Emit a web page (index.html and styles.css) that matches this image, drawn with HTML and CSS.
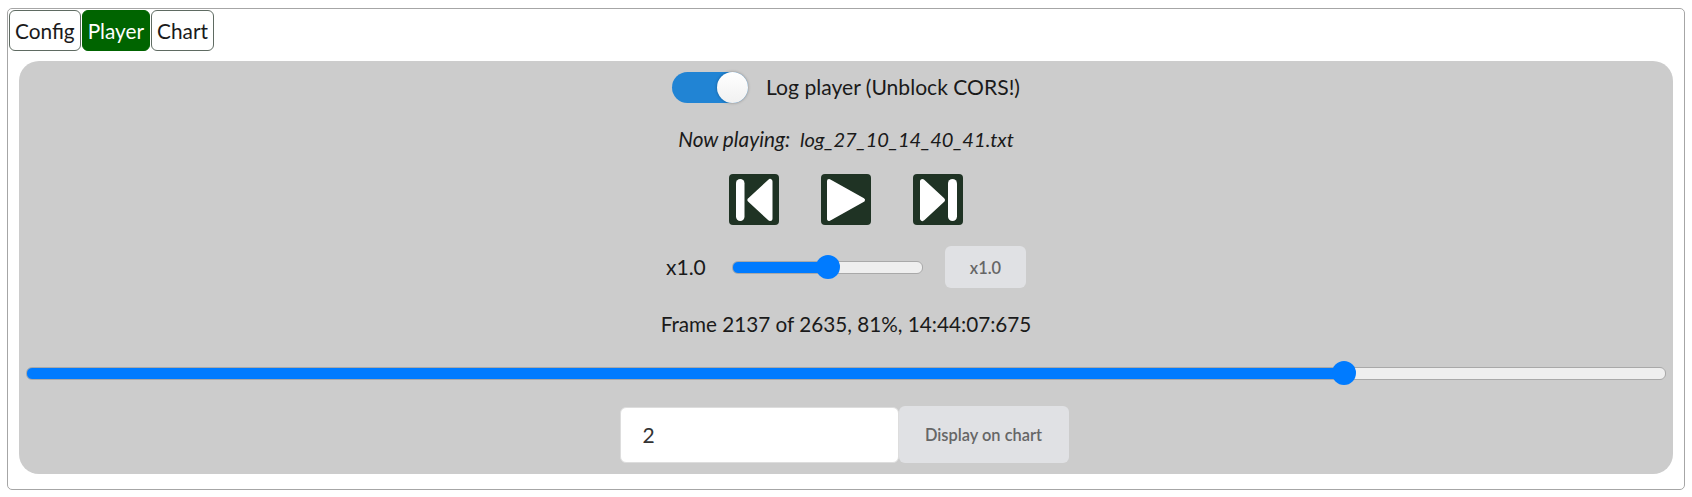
FILE: index.html
```html
<!DOCTYPE html>
<html lang="en">
<head>
    <meta charset="UTF-8">
    <meta name="viewport" content="width=device-width, initial-scale=1.0">
    <title>Player</title>
    <link rel="stylesheet" href="styles.css">
</head>
<body>
    <div class="main-box">
        <div class="tabs">
            <button class="tab">Config</button>
            <button class="tab tab-active">Player</button>
            <button class="tab">Chart</button>
        </div>
        <div class="player-panel">
            <div class="toggle-row">
                <span class="toggle"><span class="toggle-knob"></span></span>
                <span class="toggle-label">Log player (Unblock CORS!)</span>
            </div>
            <div class="now-playing">Now playing:&nbsp; <span class="now-file">log_27_10_14_40_41.txt</span></div>
            <div class="controls">
                <svg class="control-icon" viewBox="0 0 50 51">
                    <rect width="50" height="51" rx="4" fill="#1f3324"/>
                    <rect x="7" y="5" width="8.5" height="42" rx="4.2" fill="#fff"/>
                    <path d="M21 26 L41 7.5 V44.5 Z" fill="#fff" stroke="#fff" stroke-width="5" stroke-linejoin="round"/>
                </svg>
                <svg class="control-icon" viewBox="0 0 50 51">
                    <rect width="50" height="51" rx="4" fill="#1f3324"/>
                    <path d="M8 7 L42 26 L8 45 Z" fill="#fff" stroke="#fff" stroke-width="4" stroke-linejoin="round"/>
                </svg>
                <svg class="control-icon" viewBox="0 0 50 51">
                    <rect width="50" height="51" rx="4" fill="#1f3324"/>
                    <path d="M9.5 7.5 L29.5 26 L9.5 44.5 Z" fill="#fff" stroke="#fff" stroke-width="5" stroke-linejoin="round"/>
                    <rect x="35" y="5" width="9" height="42" rx="4.5" fill="#fff"/>
                </svg>
            </div>
            <div class="speed-row">
                <span class="speed-label">x1.0</span>
                <input class="slider slider-speed" type="range" min="0" max="100" value="50" style="--fill: 50%">
                <button class="grey-btn speed-btn">x1.0</button>
            </div>
            <div class="frame-info">Frame 2137 of 2635, 81%, 14:44:07:675</div>
            <input class="slider slider-frame" type="range" min="0" max="2642" value="2137" style="--fill: 81%">
            <div class="chart-row">
                <input class="frame-input" type="text" value="2">
                <button class="grey-btn chart-btn">Display on chart</button>
            </div>
        </div>
    </div>
</body>
</html>
```

FILE: styles.css
```css
* {
    box-sizing: border-box;
}
body {
    font-family: Lato, "Open Sans", sans-serif;
    background-color: #fff;
    color: #1a1a1a;
    margin: 8px 7px 7px 7px;
}
.main-box {
    border: 1px solid #a6a6a6;
    border-radius: 5px;
    height: 482px;
    padding: 1px 11px 15px 1px;
}
.tabs {
    display: flex;
    gap: 1px;
    height: 41px;
}
.tab {
    font-family: inherit;
    font-size: 20.8px;
    color: #1a1a1a;
    background-color: #fff;
    border: 1px solid #5f6b62;
    border-radius: 6px;
    padding: 0 5px;
    cursor: pointer;
}
.tab-active {
    background-color: #006400;
    border-color: #006400;
    color: #fff;
}
.player-panel {
    background-color: #ccc;
    border-radius: 20px;
    margin: 10px 0 0 10px;
    height: 413px;
    padding-top: 11px;
    display: flex;
    flex-direction: column;
    align-items: center;
}
.toggle-row {
    display: flex;
    align-items: center;
    gap: 18px;
    height: 31px;
}
.toggle {
    display: block;
    position: relative;
    width: 76px;
    height: 31px;
    border-radius: 16px;
    background-color: #2184d4;
}
.toggle-knob {
    position: absolute;
    right: 0;
    top: 0;
    width: 31px;
    height: 31px;
    border-radius: 50%;
    background: linear-gradient(#fff, #f1f1f1);
    box-shadow: 0 0 3px rgba(0, 0, 0, 0.35);
}
.toggle-label {
    font-size: 21.1px;
    line-height: 24px;
    padding-bottom: 2px;
}
.now-playing {
    font-size: 20.8px;
    font-style: italic;
    margin-top: 24px;
    line-height: 24px;
}
.now-file {
    font-size: 20.1px;
}
.controls {
    display: flex;
    gap: 42px;
    margin-top: 23px;
}
.control-icon {
    display: block;
    width: 50px;
    height: 51px;
}
.speed-row {
    display: flex;
    align-items: center;
    height: 42px;
    margin-top: 21px;
}
.speed-label {
    font-size: 21px;
    width: 66px;
    padding-bottom: 2px;
}
.grey-btn {
    font-family: inherit;
    font-size: 16.4px;
    font-weight: 600;
    color: #666;
    background-color: #e0e1e4;
    border: none;
    border-radius: 6px;
}
.speed-btn {
    width: 81px;
    height: 42px;
    margin-left: 22px;
}
.frame-info {
    font-size: 20.7px;
    line-height: 24px;
    margin-top: 24px;
}
.slider {
    -webkit-appearance: none;
    appearance: none;
    display: block;
    margin: 0;
    height: 24px;
    background: transparent;
}
.slider::-webkit-slider-runnable-track {
    height: 13px;
    border-radius: 6px;
    border: 1px solid #a9a9a9;
    background: linear-gradient(to right, #007bff var(--fill), #efefef var(--fill));
}
.slider::-webkit-slider-thumb {
    -webkit-appearance: none;
    appearance: none;
    width: 24px;
    height: 24px;
    margin-top: -6.5px;
    border-radius: 50%;
    background-color: #007bff;
}
.slider-speed {
    width: 191px;
}
.slider-frame {
    width: 1640px;
    margin: 25px 1px 0 0;
}
.chart-row {
    display: flex;
    align-items: center;
    margin-top: 21px;
    margin-right: 4px;
}
.frame-input {
    font-family: inherit;
    font-size: 21px;
    color: #333;
    width: 279px;
    height: 56px;
    padding: 0 22px;
    background-color: #fff;
    border: 1px solid #ddd;
    border-radius: 6px;
}
.chart-btn {
    width: 170px;
    height: 57px;
}
```
